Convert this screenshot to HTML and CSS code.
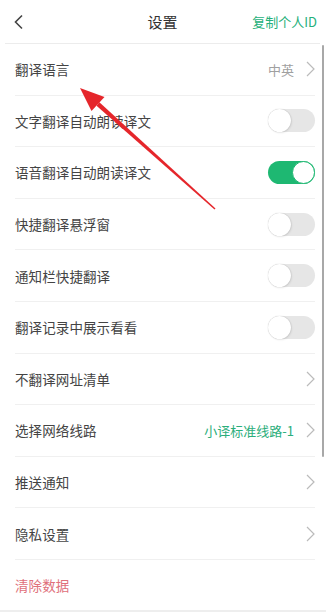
FILE: index.html
```html
<!DOCTYPE html>
<html lang="zh">
<head>
<meta charset="utf-8">
<link rel="stylesheet" href="styles.css">
</head>
<body>
<div class="page">
  <header class="topbar">
    <svg class="back" width="12" height="16" viewBox="0 0 12 16"><path d="M9 1.5 L2.5 8 L9 14.5" fill="none" stroke="#444" stroke-width="1.6"/></svg>
    <div class="title">设置</div>
    <div class="copy">复制个人ID</div>
  </header>
  <ul class="list">
    <li class="row"><span class="label">翻译语言</span><span class="right"><span class="value">中英</span><svg class="chev" width="9" height="16" viewBox="0 0 9 16"><path d="M1 1 L8 8 L1 15" fill="none" stroke="#bbb" stroke-width="1.2"/></svg></span></li>
    <li class="row"><span class="label">文字翻译自动朗读译文</span><span class="switch"><span class="knob"></span></span></li>
    <li class="row"><span class="label">语音翻译自动朗读译文</span><span class="switch on"><span class="knob"></span></span></li>
    <li class="row"><span class="label">快捷翻译悬浮窗</span><span class="switch"><span class="knob"></span></span></li>
    <li class="row"><span class="label">通知栏快捷翻译</span><span class="switch"><span class="knob"></span></span></li>
    <li class="row"><span class="label">翻译记录中展示看看</span><span class="switch"><span class="knob"></span></span></li>
    <li class="row"><span class="label">不翻译网址清单</span><span class="right"><svg class="chev" width="9" height="16" viewBox="0 0 9 16"><path d="M1 1 L8 8 L1 15" fill="none" stroke="#bbb" stroke-width="1.2"/></svg></span></li>
    <li class="row"><span class="label">选择网络线路</span><span class="right"><span class="value green">小译标准线路-1</span><svg class="chev" width="9" height="16" viewBox="0 0 9 16"><path d="M1 1 L8 8 L1 15" fill="none" stroke="#bbb" stroke-width="1.2"/></svg></span></li>
    <li class="row"><span class="label">推送通知</span><span class="right"><svg class="chev" width="9" height="16" viewBox="0 0 9 16"><path d="M1 1 L8 8 L1 15" fill="none" stroke="#bbb" stroke-width="1.2"/></svg></span></li>
    <li class="row"><span class="label">隐私设置</span><span class="right"><svg class="chev" width="9" height="16" viewBox="0 0 9 16"><path d="M1 1 L8 8 L1 15" fill="none" stroke="#bbb" stroke-width="1.2"/></svg></span></li>
    <li class="row last"><span class="label danger">清除数据</span></li>
  </ul>
  <div class="scrollbar"></div>
  <svg class="arrow" width="326" height="614" viewBox="0 0 326 614">
    <polygon points="215.5,208.5 214.5,209.5 96.5,105.7 99.4,102.3" fill="#e5262b"/>
    <polygon points="80,88 104.5,97 91.5,111" fill="#e5262b"/>
  </svg>
</div>
</body>
</html>
```
FILE: styles.css
```css
* { box-sizing: border-box; margin: 0; padding: 0; }
html, body { background: #fff; }
body {
  margin: 0;
  font-family: "Noto Sans CJK SC", "Noto Sans", sans-serif;
  color: #333;
}
.page {
  position: relative;
  width: 326px;
  height: 614px;
  overflow: hidden;
}
.topbar {
  height: 44px;
  display: flex;
  align-items: center;
  justify-content: space-between;
  padding: 0 3px 0 8px;
  margin: 0 6px 0 5px;
  border-bottom: 1px solid #ececec;
  position: relative;
}
.back { display: block; }
.title {
  position: absolute;
  left: 0; right: 0;
  text-align: center;
  font-size: 15px;
  color: #333;
  pointer-events: none;
  top: 11px;
  line-height: 22px;
}
.copy {
  font-size: 13px;
  color: #25b07a;
}
.list { list-style: none; }
.row {
  height: 51.6px;
  margin: 0 11px 0 15px;
  display: flex;
  align-items: center;
  justify-content: space-between;
  border-bottom: 1px solid #f0f0f0;
}
.row.last {
  margin: 0;
  padding: 0 11px 0 15px;
  border-bottom: 2px solid #eeeeee;
}
.label { font-size: 13.5px; color: #444; letter-spacing: 0.1px; }
.label.danger { color: #e0707b; }
.right { display: flex; align-items: center; gap: 12px; }
.value { font-size: 13px; color: #a0a0a0; }
.value.green { color: #2bae7b; }
.chev { display: block; }
.switch {
  width: 47px;
  height: 23px;
  border-radius: 12px;
  background: #e6e6e6;
  position: relative;
}
.switch .knob {
  position: absolute;
  left: 0; top: 0;
  width: 23px; height: 23px;
  border-radius: 50%;
  background: #fff;
  box-shadow: 0 0 1px rgba(0,0,0,0.25), 1px 1px 2px rgba(0,0,0,0.08);
}
.switch.on { background: #1eb872; }
.switch.on .knob {
  left: auto; right: 0;
  border: 1px solid #1eb872;
  box-shadow: none;
}
.scrollbar {
  position: absolute;
  right: 2px;
  top: 45px;
  width: 2px;
  height: 412px;
  background: #a8a8a8;
  border-radius: 1px;
}
.arrow {
  position: absolute;
  left: 0; top: 0;
  pointer-events: none;
}
```
